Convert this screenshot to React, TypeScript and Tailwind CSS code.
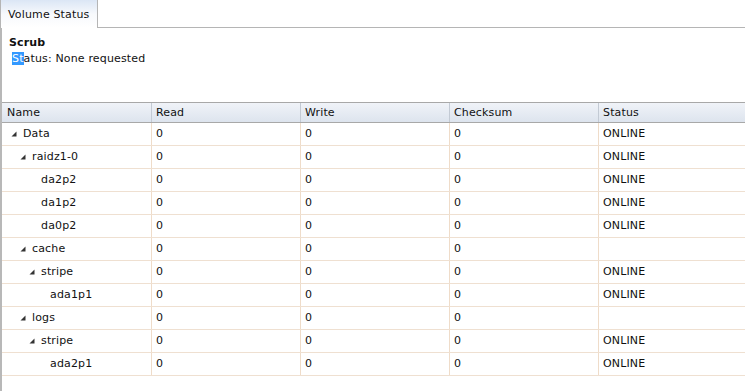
import React from "react";

type Row = { name: string; level: number; expandable: boolean; status: string };

const rows: Row[] = [
  { name: "Data", level: 0, expandable: true, status: "ONLINE" },
  { name: "raidz1-0", level: 1, expandable: true, status: "ONLINE" },
  { name: "da2p2", level: 2, expandable: false, status: "ONLINE" },
  { name: "da1p2", level: 2, expandable: false, status: "ONLINE" },
  { name: "da0p2", level: 2, expandable: false, status: "ONLINE" },
  { name: "cache", level: 1, expandable: true, status: "" },
  { name: "stripe", level: 2, expandable: true, status: "ONLINE" },
  { name: "ada1p1", level: 3, expandable: false, status: "ONLINE" },
  { name: "logs", level: 1, expandable: true, status: "" },
  { name: "stripe", level: 2, expandable: true, status: "ONLINE" },
  { name: "ada2p1", level: 3, expandable: false, status: "ONLINE" },
];

function Arrow() {
  return (
    <svg width="6" height="6" viewBox="0 0 6 6" className="block">
      <polygon points="5.5,0.5 5.5,5.5 0.5,5.5" fill="#333" />
    </svg>
  );
}

export default function App() {
  return (
    <div
      className="w-[745px] h-[391px] bg-white overflow-hidden flex flex-col text-[11px] text-[#111] tracking-[0.15px]"
      style={{ fontFamily: '"DejaVu Sans", Verdana, sans-serif' }}
    >
      {/* tab bar */}
      <div className="flex h-[28px] shrink-0">
        <div className="w-[98px] h-[28px] border-l border-r border-[#b5b5b5] bg-gradient-to-b from-[#dbe6f5] via-[#f7f9fc] to-white flex items-center pl-[7px] pt-[3px]">
          Volume Status
        </div>
        <div className="flex-1 border-b border-[#b5b5b5]" />
      </div>
      {/* panel */}
      <div className="flex-1 border-l-2 border-[#b8b8b8] flex flex-col">
        <div className="h-[74px] pl-[7px] pt-[8px]">
          <div className="font-bold leading-[14px]">Scrub</div>
          <div className="leading-[14px] mt-[2px] pl-[3px]">
            <span className="bg-[#3399ff] text-white">St</span>atus: None requested
          </div>
        </div>
        <div className="border-t border-[#a8a8a8]">
          <div className="grid grid-cols-[150px_149px_149px_149px_1fr] h-[20px] bg-gradient-to-b from-[#f0f3f8] to-[#dde4ee] border-b border-[#a8a8a8]">
            {["Name", "Read", "Write", "Checksum", "Status"].map((h, i) => (
              <div
                key={h}
                className={`flex items-center pt-[2px] ${i === 0 ? "pl-[5px]" : "pl-[4px]"} ${i < 4 ? "border-r border-[#c3cad4]" : ""}`}
              >
                {h}
              </div>
            ))}
          </div>
          {rows.map((r, idx) => (
            <div
              key={idx}
              className="grid grid-cols-[150px_149px_149px_149px_1fr] h-[23px] border-b border-[#efe0d1]"
            >
              <div
                className="flex items-center border-r border-[#efdcc9]"
                style={{ paddingLeft: 9 + r.level * 9 }}
              >
                <span className="w-[12px] flex items-center">{r.expandable ? <Arrow /> : null}</span>
                <span>{r.name}</span>
              </div>
              <div className="flex items-center pl-[4px] border-r border-[#efdcc9]">0</div>
              <div className="flex items-center pl-[4px] border-r border-[#efdcc9]">0</div>
              <div className="flex items-center pl-[4px] border-r border-[#efdcc9]">0</div>
              <div className="flex items-center pl-[4px]">{r.status}</div>
            </div>
          ))}
        </div>
      </div>
    </div>
  );
}
